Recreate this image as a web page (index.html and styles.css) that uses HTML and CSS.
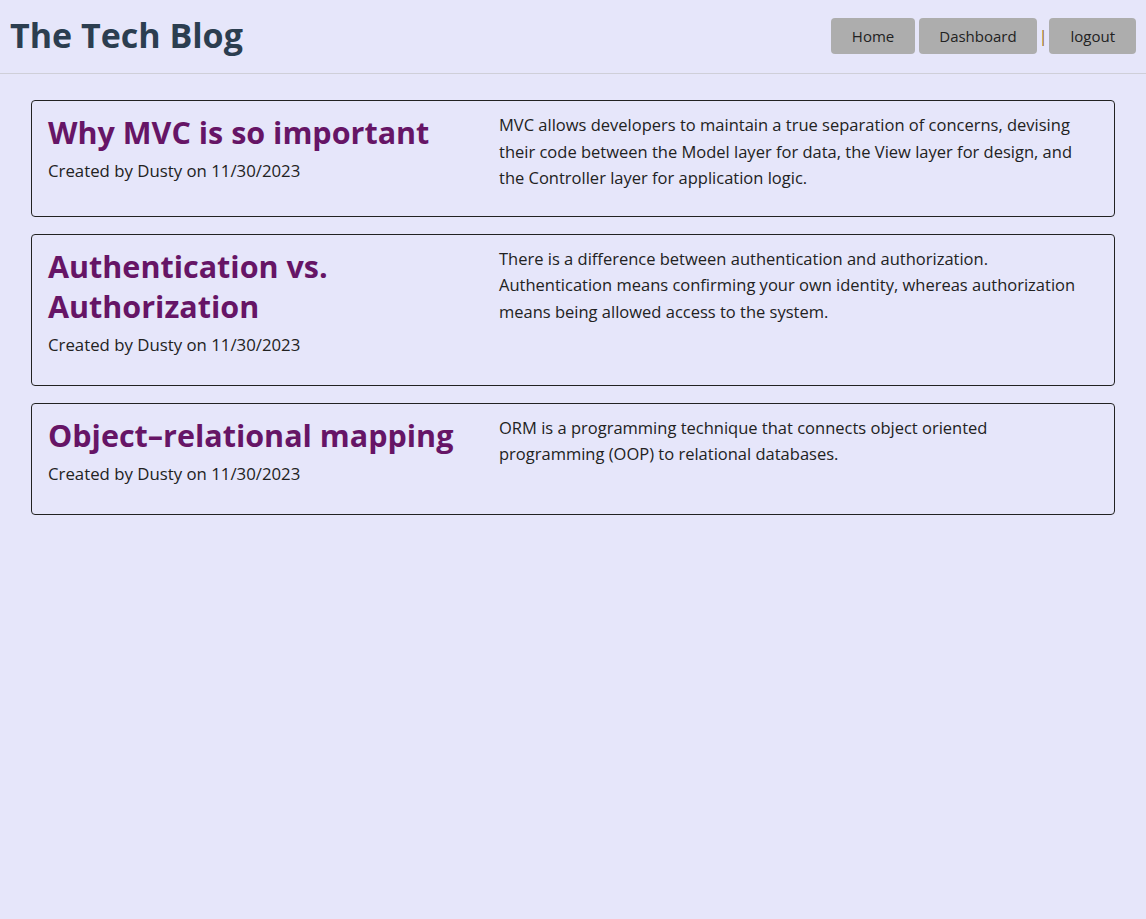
FILE: index.html
```html
<!DOCTYPE html>
<html lang="en">
<head>
<meta charset="utf-8">
<title>The Tech Blog</title>
<link rel="stylesheet" href="styles.css">
</head>
<body>
<header class="site-header">
  <h1 class="site-title">The Tech Blog</h1>
  <nav class="nav">
    <button class="nav-btn">Home</button>
    <button class="nav-btn">Dashboard</button>
    <span class="nav-sep">|</span>
    <button class="nav-btn">logout</button>
  </nav>
</header>
<main class="posts">
  <article class="post">
    <div class="post-head">
      <h2 class="post-title">Why MVC is so important</h2>
      <p class="post-meta">Created by Dusty on 11/30/2023</p>
    </div>
    <p class="post-body">MVC allows developers to maintain a true separation of concerns, devising their code between the Model layer for data, the View layer for design, and the Controller layer for application logic.</p>
  </article>
  <article class="post">
    <div class="post-head">
      <h2 class="post-title">Authentication vs. Authorization</h2>
      <p class="post-meta">Created by Dusty on 11/30/2023</p>
    </div>
    <p class="post-body">There is a difference between authentication and authorization. Authentication means confirming your own identity, whereas authorization means being allowed access to the system.</p>
  </article>
  <article class="post">
    <div class="post-head">
      <h2 class="post-title">Object–relational mapping</h2>
      <p class="post-meta">Created by Dusty on 11/30/2023</p>
    </div>
    <p class="post-body">ORM is a programming technique that connects object oriented programming (OOP) to relational databases.</p>
  </article>
</main>
</body>
</html>
```

FILE: styles.css
```css
html, body {
  margin: 0;
  padding: 0;
  background: #e6e6fa;
}
body {
  font-family: "Open Sans", "Noto Sans", sans-serif;
  color: #222;
  min-height: 919px;
}
.site-header {
  display: flex;
  justify-content: space-between;
  align-items: center;
  box-sizing: border-box;
  height: 74px;
  padding: 0 10px;
  border-bottom: 1px solid #cfcfd8;
}
.site-title {
  margin: -4px 0 0;
  font-size: 34px;
  font-weight: 700;
  color: #2c3e50;
  line-height: 1;
}
.nav {
  display: flex;
  align-items: center;
  gap: 4px;
  margin-top: -2px;
}
.nav-btn {
  font-family: "Open Sans", "Noto Sans", sans-serif;
  font-size: 15px;
  color: #222;
  background: #adadad;
  border: none;
  border-radius: 4px;
  height: 36px;
  padding: 0 21px;
}
.nav-btn:nth-child(2) {
  padding: 0 20px;
}
.nav-sep {
  color: #9a6a08;
  font-size: 16px;
  margin: 0 -2px;
}
.posts {
  display: flex;
  flex-direction: column;
  gap: 17px;
  padding: 26px 31px;
}
.post {
  display: grid;
  grid-template-columns: 435px 1fr;
  column-gap: 16px;
  align-items: start;
  border: 1px solid #222;
  border-radius: 4px;
  padding: 11px 20px 24px 16px;
}
.post-head {
  padding-bottom: 3px;
}
.post-title {
  margin: 0;
  font-size: 30.5px;
  line-height: 40px;
  font-weight: 700;
  color: #661566;
}
.post-meta {
  margin: 6px 0 0;
  font-size: 16.8px;
  line-height: 26px;
}
.post-body {
  margin: 0;
  font-size: 16.5px;
  line-height: 26.5px;
}
```
